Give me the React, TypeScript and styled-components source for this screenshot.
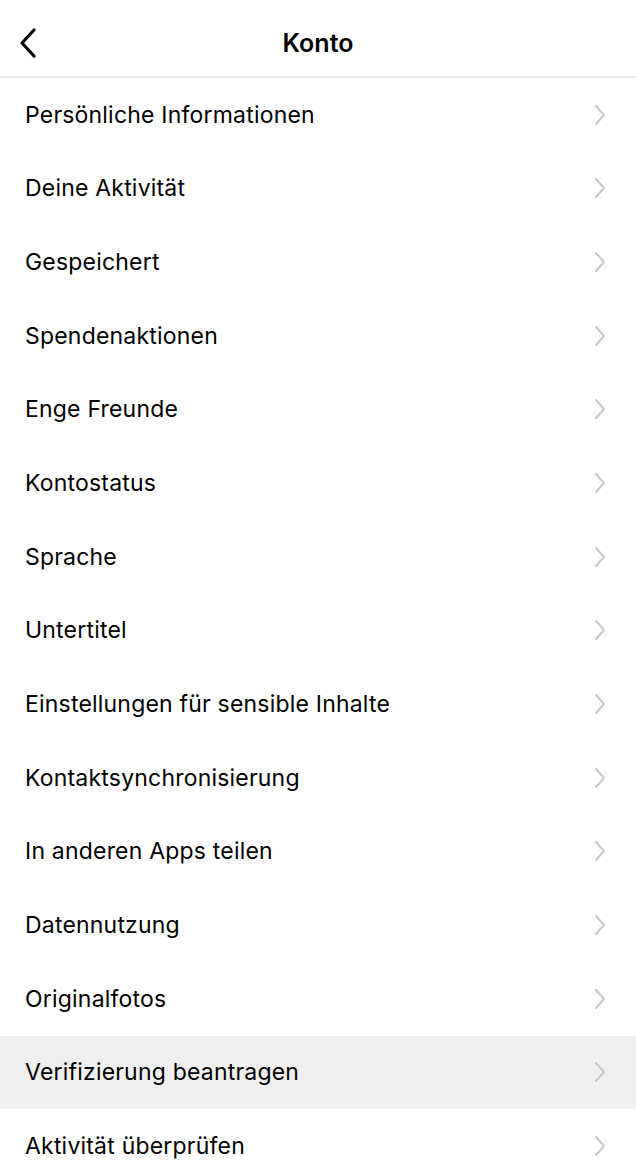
import { FC } from 'react'
import styled, { createGlobalStyle } from 'styled-components'

const GlobalStyle = createGlobalStyle`
  body {
    margin: 0;
    background: #fff;
    font-family: Inter, "Liberation Sans", sans-serif;
    color: #000;
  }
`

const Page = styled.div`
  width: 636px;
  height: 1175px;
  overflow: hidden;
  background: #fff;
`

const Header = styled.header`
  height: 66px;
  padding-top: 10px;
  display: grid;
  grid-template-columns: 60px 1fr 60px;
  align-items: center;
  border-bottom: 2px solid #e8e8e8;
`

const BackButton = styled.button`
  border: 0;
  background: none;
  padding: 0 0 0 17px;
  height: 100%;
  display: flex;
  align-items: center;
`

const Title = styled.h1`
  margin: 0;
  text-align: center;
  font-size: 25px;
  font-weight: 600;
`

const List = styled.ul`
  list-style: none;
  margin: 0;
  padding: 0;
`

const Row = styled.li<{ $active?: boolean }>`
  height: 73.67px;
  display: flex;
  align-items: center;
  justify-content: space-between;
  padding: 0 28px 0 25px;
  background: ${(p) => (p.$active ? '#efefef' : '#fff')};
  font-size: 23px;
  letter-spacing: 0.2px;
`

const items = [
  'Persönliche Informationen',
  'Deine Aktivität',
  'Gespeichert',
  'Spendenaktionen',
  'Enge Freunde',
  'Kontostatus',
  'Sprache',
  'Untertitel',
  'Einstellungen für sensible Inhalte',
  'Kontaktsynchronisierung',
  'In anderen Apps teilen',
  'Datennutzung',
  'Originalfotos',
  'Verifizierung beantragen',
  'Aktivität überprüfen',
]

const Chevron: FC = () => (
  <svg width="16" height="22" viewBox="0 0 16 22">
    <path d="M4 2 L12 11 L4 20" fill="none" stroke="#c7c7c7" strokeWidth="2" strokeLinecap="round" strokeLinejoin="round" />
  </svg>
)

export default function App() {
  return (
    <Page>
      <GlobalStyle />
      <Header>
        <BackButton>
          <svg width="24" height="32" viewBox="0 0 24 32">
            <path d="M17 3 L5 16 L17 29" fill="none" stroke="#000" strokeWidth="3.2" strokeLinecap="round" strokeLinejoin="round" />
          </svg>
        </BackButton>
        <Title>Konto</Title>
        <span />
      </Header>
      <List>
        {items.map((item) => (
          <Row key={item} $active={item === 'Verifizierung beantragen'}>
            <span>{item}</span>
            <Chevron />
          </Row>
        ))}
      </List>
    </Page>
  )
}
